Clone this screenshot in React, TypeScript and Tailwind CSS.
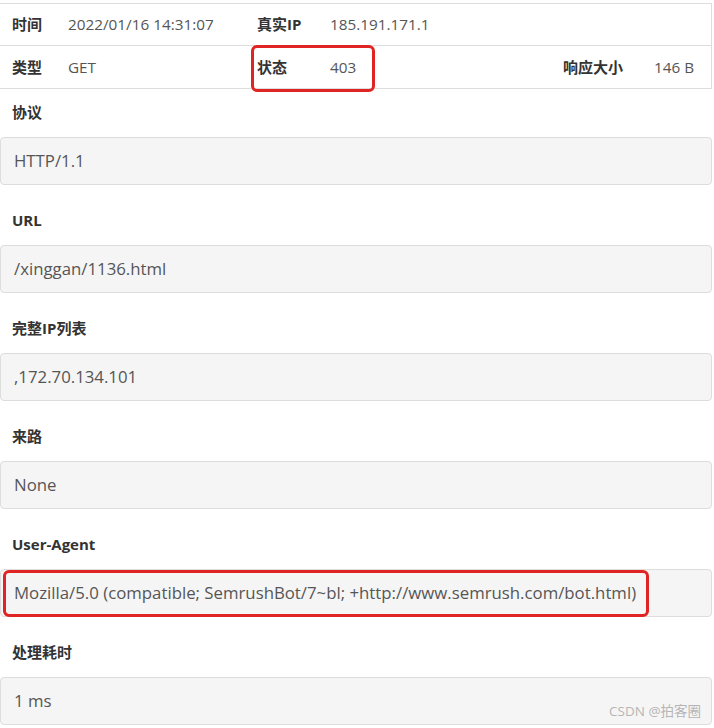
import React from "react";

const sections = [
  { label: "协议", value: "HTTP/1.1" },
  { label: "URL", value: "/xinggan/1136.html" },
  { label: "完整IP列表", value: ",172.70.134.101" },
  { label: "来路", value: "None" },
  { label: "User-Agent", value: "Mozilla/5.0 (compatible; SemrushBot/7~bl; +http://www.semrush.com/bot.html)", marked: true },
  { label: "处理耗时", value: "1 ms", watermark: true },
];

const font = { fontFamily: '"Open Sans", "Noto Sans CJK SC", sans-serif' };

export default function App() {
  return (
    <div className="w-[714px] h-[728px] bg-white overflow-hidden text-[#333]" style={font}>
      <div className="relative mt-[3px] w-[712px] border-t border-r border-b border-[#ddd] text-[15.3px]">
        <div className="grid grid-cols-[56px_189px_73px_233px_91px_1fr] h-[42px] items-center border-b border-[#ddd]">
          <div className="pl-3 text-[15px] font-bold">时间</div>
          <div className="pl-3 text-[#555]">2022/01/16 14:31:07</div>
          <div className="pl-3 text-[15px] font-bold">真实IP</div>
          <div className="pl-3 text-[#555] col-span-3">185.191.171.1</div>
        </div>
        <div className="grid grid-cols-[56px_189px_73px_233px_91px_1fr] h-[42px] items-center">
          <div className="pl-3 text-[15px] font-bold">类型</div>
          <div className="pl-3 text-[#555]">GET</div>
          <div className="pl-3 text-[15px] font-bold">状态</div>
          <div className="pl-3 text-[#555]">403</div>
          <div className="pl-3 text-[15px] font-bold">响应大小</div>
          <div className="pl-3 text-[#555]">146 B</div>
        </div>
        <div className="absolute left-[251px] top-[41px] w-[124px] h-[47px] border-[3px] border-[#e02424] rounded-md"></div>
      </div>

      {sections.map((s, i) => (
        <div key={s.label} className={i === 0 ? "mt-[13px]" : "mt-[25px]"}>
          <div className="h-5 leading-5 pl-3 text-[15px] font-bold mb-[15px]">{s.label}</div>
          <div className="relative w-[712px] h-12 flex items-center px-[13px] bg-[#f5f5f5] border border-[#ddd] rounded text-[16.8px] text-[#555]">
            {s.value}
            {s.marked && (
              <div className="absolute left-[2px] top-0 w-[646px] h-[47px] border-[3px] border-[#e02424] rounded-md"></div>
            )}
            {s.watermark && (
              <span className="absolute right-[10px] bottom-[3px] text-[13.5px] text-[#b5b5b5]">CSDN @拍客圈</span>
            )}
          </div>
        </div>
      ))}
    </div>
  );
}
